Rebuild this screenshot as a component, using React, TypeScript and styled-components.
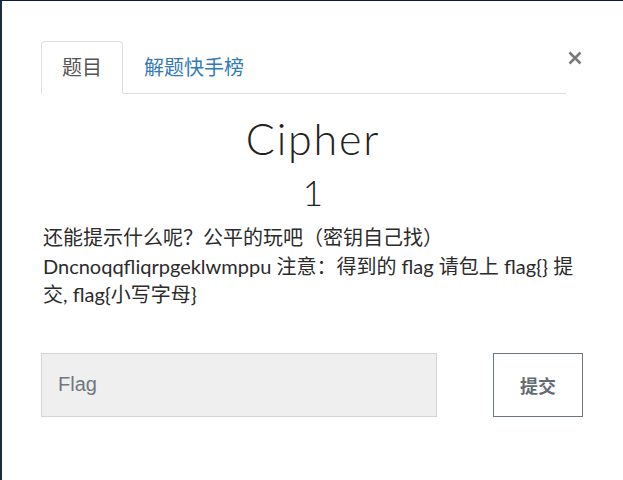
import React from "react";
import styled, { createGlobalStyle } from "styled-components";

const GlobalStyle = createGlobalStyle`
  html, body { margin: 0; padding: 0; background: #ffffff; }
  * { box-sizing: border-box; }
  body { font-family: Lato, "Noto Sans CJK SC", sans-serif; color: #333; }
`;

const Frame = styled.div`
  width: 623px;
  height: 480px;
  overflow: hidden;
  background: #fff;
  border-top: 1px solid #0b1a3b;
  border-left: 2px solid #1c2a3e;
  padding: 40px 40px 0 39px;
`;

const Header = styled.div`
  display: flex;
  align-items: flex-start;
`;

const TabList = styled.ul`
  list-style: none;
  margin: 0;
  padding: 0;
  flex: 1;
  display: flex;
  border-bottom: 1px solid #ddd;
  height: 53px;
`;

const Tab = styled.li<{ $active?: boolean }>`
  height: 53px;
  margin-bottom: -1px;
  padding: 0 20px 2px;
  display: flex;
  align-items: center;
  font-family: Lato, "Noto Sans CJK SC", sans-serif;
  font-size: 20px;
  color: ${(p) => (p.$active ? "#555" : "#337ab7")};
  border: 1px solid ${(p) => (p.$active ? "#ddd" : "transparent")};
  border-bottom-color: ${(p) => (p.$active ? "#fff" : "transparent")};
  border-radius: 4px 4px 0 0;
  background: ${(p) => (p.$active ? "#fff" : "transparent")};
`;

const Close = styled.button`
  width: 17px;
  height: 34px;
  padding: 0;
  border: 0;
  background: transparent;
  display: flex;
  align-items: center;
  justify-content: center;
  cursor: pointer;
`;

const Body = styled.div`
  display: flex;
  flex-direction: column;
  padding-left: 2px;
`;

const Title = styled.h1`
  margin: 21px 0 0;
  text-align: center;
  font-family: Lato, sans-serif;
  font-weight: 300;
  font-size: 43px;
  line-height: 48px;
  letter-spacing: 1.8px;
  color: #222;
`;

const Value = styled.div`
  margin-top: 9px;
  text-align: center;
  font-family: Lato, sans-serif;
  font-weight: 300;
  font-size: 35px;
  line-height: 40px;
  color: #222;
`;

const Description = styled.p`
  margin: 11px 0 0;
  font-family: Lato, "Noto Sans CJK SC", sans-serif;
  font-size: 20px;
  line-height: 28.5px;
  color: #2b2b2b;
`;

const Form = styled.form`
  display: flex;
  gap: 56px;
  margin-top: 44px;
  margin-left: -2px;
`;

const Input = styled.input`
  width: 397px;
  height: 64px;
  background: #efefef;
  border: 1px solid #d2d6da;
  padding: 0 16px;
  font-family: "Liberation Sans", Arial, sans-serif;
  font-size: 20px;
  color: #333;
  outline: none;
  &::placeholder { color: #6f7780; }
`;

const Submit = styled.button`
  width: 90px;
  height: 64px;
  background: #fff;
  border: 1px solid #6c757d;
  font-family: "Noto Sans CJK SC", sans-serif;
  font-weight: 700;
  font-size: 18px;
  color: #646b73;
  cursor: pointer;
`;

export default function App() {
  return (
    <>
      <GlobalStyle />
      <Frame>
        <Header>
          <TabList>
            <Tab $active>题目</Tab>
            <Tab>解题快手榜</Tab>
          </TabList>
          <Close aria-label="Close">
            <svg width="14" height="14" viewBox="0 0 14 14">
              <path d="M1.5 1.5 L12.5 12.5 M12.5 1.5 L1.5 12.5" stroke="#7a7a7a" strokeWidth="2.6" strokeLinecap="butt" />
            </svg>
          </Close>
        </Header>
        <Body>
          <Title>Cipher</Title>
          <Value>1</Value>
          <Description>
            还能提示什么呢？公平的玩吧（密钥自己找） Dncnoqqfliqrpgeklwmppu 注意：得到的 flag 请包上 flag{"{}"} 提交, flag{"{"}小写字母{"}"}
          </Description>
          <Form onSubmit={(e) => e.preventDefault()}>
            <Input placeholder="Flag" />
            <Submit type="submit">提交</Submit>
          </Form>
        </Body>
      </Frame>
    </>
  );
}
